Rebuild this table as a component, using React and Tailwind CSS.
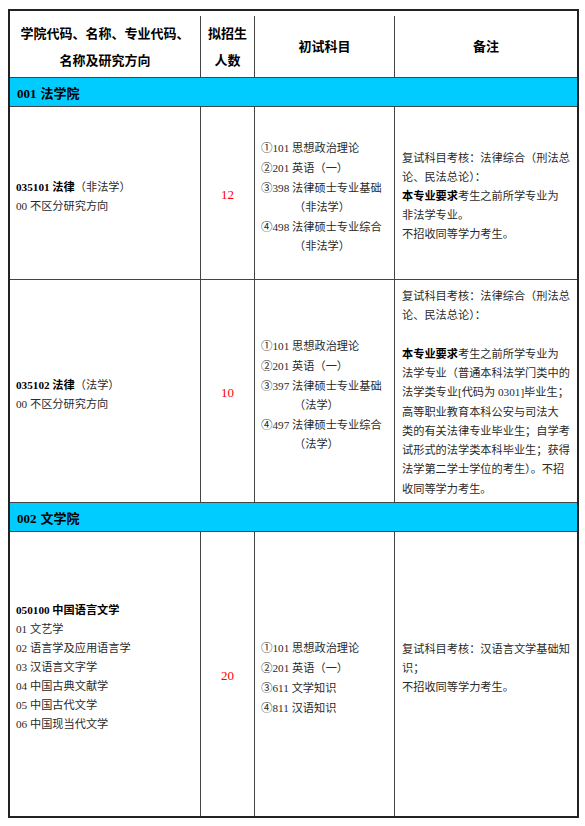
import React from 'react';

const serif = { fontFamily: '"Liberation Serif", "Noto Sans CJK SC", serif' };

const Circ = ({ c }) => (
  <span className="text-[11.5px]" style={{ fontFamily: '"Noto Sans CJK SC", "DejaVu Sans", sans-serif' }}>
    {c}
  </span>
);

const Exam = ({ items }) => (
  <div className="flex flex-col justify-center border-r border-[#444] pt-[7px] pl-[6px] text-[11.2px] leading-[19px] text-[#2a2a2a]">
    {items.map((it, i) => (
      <React.Fragment key={i}>
        <div className="whitespace-nowrap">
          <Circ c={it[0]} />
          {it[1]}
        </div>
        {it[2] && <div className="whitespace-nowrap pl-[33px]">{it[2]}</div>}
      </React.Fragment>
    ))}
  </div>
);

const Count = ({ n }) => (
  <div className="flex items-center justify-center border-r border-[#444] pt-[4px] text-[13px] text-[#ff0000]">
    {n}
  </div>
);

const Band = ({ code, name }) => (
  <div className="flex h-[29px] items-center border-b border-[#444] bg-[#00ccff] pt-[3px] pl-[7px] text-[13px] font-bold text-black">
    <span>{code}</span>
    <span className="ml-[4px]">{name}</span>
  </div>
);

export default function App() {
  return (
    <div className="min-h-[826px] bg-white pt-[9px] pl-[8px]" style={serif}>
      <div className="w-[571px] border-2 border-[#222]">
        {/* header */}
        <div className="grid h-[67px] grid-cols-[191px_54px_140px_1fr] border-b border-[#444] pt-[5px] text-[13px] font-bold leading-[27px] text-black">
          <div className="flex flex-col items-center justify-center border-r border-[#444]">
            <div>学院代码、名称、专业代码、</div>
            <div>名称及研究方向</div>
          </div>
          <div className="flex flex-col items-center justify-center border-r border-[#444]">
            <div>拟招生</div>
            <div>人数</div>
          </div>
          <div className="flex items-center justify-center border-r border-[#444]">初试科目</div>
          <div className="flex items-center justify-center">备注</div>
        </div>

        <Band code="001" name="法学院" />

        {/* 035101 */}
        <div className="grid h-[173px] grid-cols-[191px_54px_140px_1fr] border-b border-[#444]">
          <div className="flex flex-col justify-center border-r border-[#444] pt-[7px] pl-[6px] text-[11.2px] leading-[19px] text-[#2a2a2a]">
            <div>
              <span className="font-bold text-black">035101 法律</span>（非法学）
            </div>
            <div>00 不区分研究方向</div>
          </div>
          <Count n="12" />
          <Exam
            items={[
              ['①', '101 思想政治理论'],
              ['②', '201 英语（一）'],
              ['③', '398 法律硕士专业基础', '（非法学）'],
              ['④', '498 法律硕士专业综合', '（非法学）'],
            ]}
          />
          <div className="flex flex-col justify-center pt-[6px] pl-[7px] text-[11.2px] leading-[19px] text-[#2a2a2a]">
            <div>复试科目考核：法律综合（刑法总</div>
            <div>论、民法总论）：</div>
            <div>
              <span className="font-bold text-black">本专业要求</span>考生之前所学专业为
            </div>
            <div>非法学专业。</div>
            <div>不招收同等学力考生。</div>
          </div>
        </div>

        {/* 035102 */}
        <div className="grid h-[223px] grid-cols-[191px_54px_140px_1fr] border-b border-[#444]">
          <div className="flex flex-col justify-center border-r border-[#444] pt-[7px] pl-[6px] text-[11.2px] leading-[19px] text-[#2a2a2a]">
            <div>
              <span className="font-bold text-black">035102 法律</span>（法学）
            </div>
            <div>00 不区分研究方向</div>
          </div>
          <Count n="10" />
          <Exam
            items={[
              ['①', '101 思想政治理论'],
              ['②', '201 英语（一）'],
              ['③', '397 法律硕士专业基础', '（法学）'],
              ['④', '497 法律硕士专业综合', '（法学）'],
            ]}
          />
          <div className="flex flex-col justify-center pt-[4px] pl-[7px] text-[11.2px] leading-[19.3px] text-[#2a2a2a]">
            <div>复试科目考核：法律综合（刑法总</div>
            <div>论、民法总论）：</div>
            <div className="h-[19px]" />
            <div>
              <span className="font-bold text-black">本专业要求</span>考生之前所学专业为
            </div>
            <div>法学专业（普通本科法学门类中的</div>
            <div>法学类专业[代码为 0301]毕业生；</div>
            <div>高等职业教育本科公安与司法大</div>
            <div>类的有关法律专业毕业生；自学考</div>
            <div>试形式的法学类本科毕业生；获得</div>
            <div>法学第二学士学位的考生）。不招</div>
            <div>收同等学力考生。</div>
          </div>
        </div>

        <Band code="002" name="文学院" />

        {/* 050100 */}
        <div className="grid h-[284px] grid-cols-[191px_54px_140px_1fr]">
          <div className="flex flex-col justify-center border-r border-[#444] pt-[4px] pb-[18px] pl-[6px] text-[11.2px] leading-[19px] text-[#2a2a2a]">
            <div className="font-bold text-black">050100 中国语言文学</div>
            <div>01 文艺学</div>
            <div>02 语言学及应用语言学</div>
            <div>03 汉语言文字学</div>
            <div>04 中国古典文献学</div>
            <div>05 中国古代文学</div>
            <div>06 中国现当代文学</div>
          </div>
          <Count n="20" />
          <Exam
            items={[
              ['①', '101 思想政治理论'],
              ['②', '201 英语（一）'],
              ['③', '611 文学知识'],
              ['④', '811 汉语知识'],
            ]}
          />
          <div className="flex flex-col justify-center pt-[4px] pb-[16px] pl-[7px] text-[11.2px] leading-[19px] text-[#2a2a2a]">
            <div>复试科目考核：汉语言文学基础知</div>
            <div>识；</div>
            <div>不招收同等学力考生。</div>
          </div>
        </div>
      </div>
    </div>
  );
}
